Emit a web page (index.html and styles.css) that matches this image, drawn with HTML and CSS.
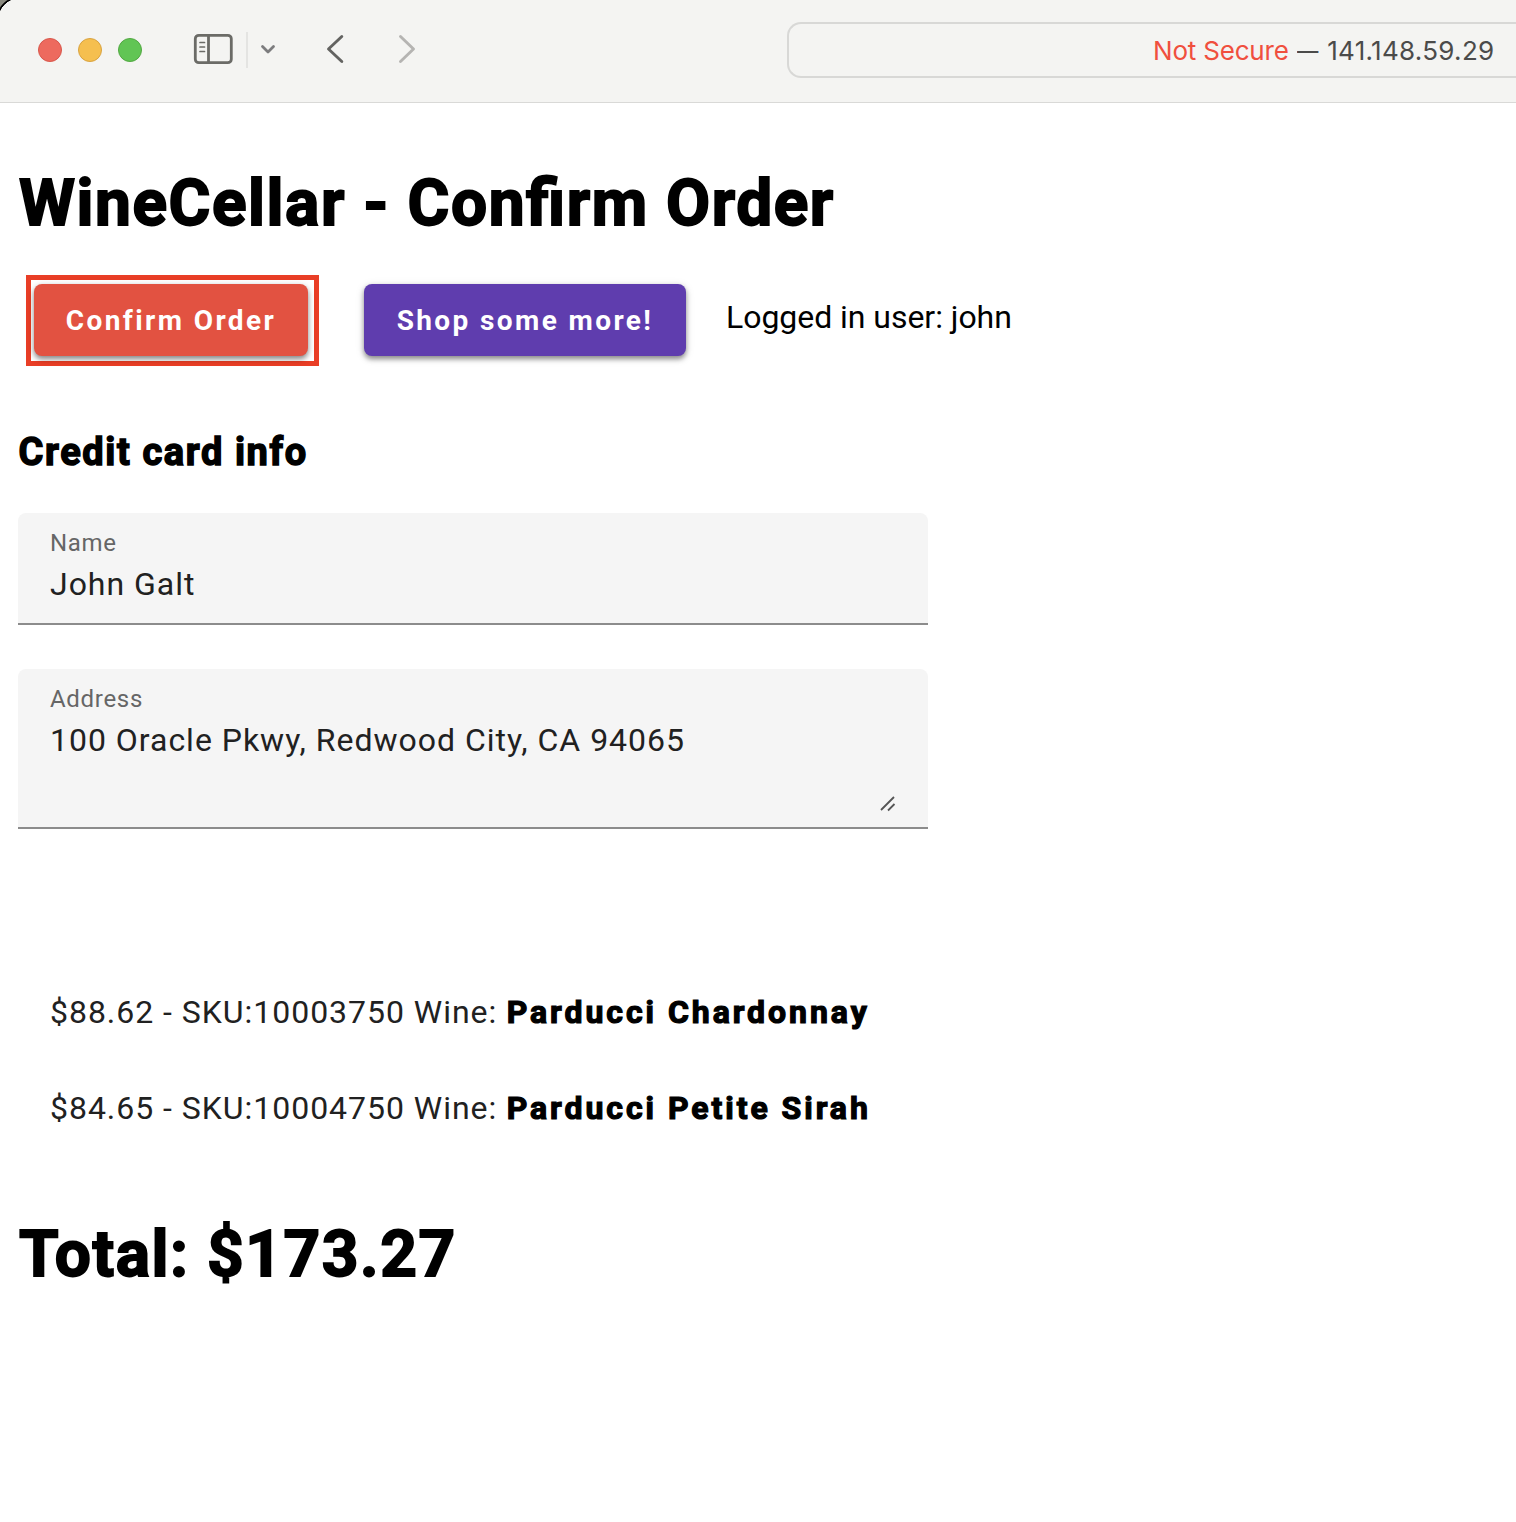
FILE: index.html
```html
<!DOCTYPE html>
<html lang="en">
<head>
<meta charset="utf-8">
<title>WineCellar - Confirm Order</title>
<link rel="stylesheet" href="styles.css">
</head>
<body>
<header class="toolbar">
  <span class="light red"></span><span class="light yellow"></span><span class="light green"></span>
  <svg class="sidebar-icon" width="40" height="32" viewBox="0 0 40 32" fill="none" stroke="#6b6b67" stroke-width="2.800"><rect x="2.300" y="2.300" width="36" height="27.400" rx="3.500"/><path d="M15.500 2.500v27"/><path stroke-width="1.700" stroke-linecap="round" d="M7 9.500h4.500M7 14h4.500M7 18.500h4.500"/></svg>
  <span class="divider"></span>
  <svg class="down-icon" width="16" height="10" viewBox="0 0 16 10" fill="none" stroke="#7c7c7e" stroke-width="2.800" stroke-linecap="round" stroke-linejoin="round"><path d="M2.500 2.500l5.500 5.500L13.500 2.500"/></svg>
  <svg class="back-icon" width="20" height="30" viewBox="0 0 20 30" fill="none" stroke="#636361" stroke-width="2.900" stroke-linecap="round" stroke-linejoin="round"><path d="M16.800 2.500L3.500 15l13.300 12.500"/></svg>
  <svg class="forward-icon" width="20" height="30" viewBox="0 0 20 30" fill="none" stroke="#b5b4b2" stroke-width="2.900" stroke-linecap="round" stroke-linejoin="round"><path d="M3.500 2.500l13 12.500L3.500 27.500"/></svg>
  <div class="address-bar"><span class="insecure">Not Secure</span><span class="dash">—</span><span class="host">141.148.59.29</span></div>
</header>
<main>
  <h1>WineCellar - Confirm Order</h1>
  <div class="actions">
    <div class="highlight"><button class="button confirm">Confirm Order</button></div>
    <button class="button shop">Shop some more!</button>
    <span class="user">Logged in user: john</span>
  </div>
  <h2>Credit card info</h2>
  <div class="field name"><div class="label">Name</div><div class="value">John Galt</div></div>
  <div class="field address"><div class="label">Address</div><div class="value">100 Oracle Pkwy, Redwood City, CA 94065</div>
    <svg class="grip" width="16" height="16" viewBox="0 0 16 16" stroke="#555" stroke-width="1.800"><path d="M1 14L14 1M8 14.500l6.500-6.500"/></svg>
  </div>
  <ul class="items">
    <li><span>$88.62 - SKU:10003750 Wine: </span><b>Parducci Chardonnay</b></li>
    <li><span>$84.65 - SKU:10004750 Wine: </span><b>Parducci Petite Sirah</b></li>
  </ul>
  <h1 class="total">Total: $173.27</h1>
</main>
</body>
</html>
```
FILE: styles.css
```css
* { box-sizing: border-box; }
body { margin: 0; background: #fff; color: #000; font-family: Roboto, "Liberation Sans", sans-serif; height: 1522px; overflow: hidden; }
.toolbar { display: flex; align-items: center; height: 103px; padding: 0 0 3px 38px; background: radial-gradient(circle at 20px 20px, #f4f4f2 21.500px, #000 22px 23px, #8a8a80 24px) 0 0 / 12px 12px no-repeat, #f4f4f2; border-bottom: 1px solid #d9d9d7; }
.toolbar > * { flex: none; }
.light { width: 24px; height: 24px; margin-right: 16px; border-radius: 50%; border: 1px solid #d8574c; background: #ed6a5e; }
.yellow { background: #f5bf4f; border-color: #d9a341; }
.green { background: #61c554; border-color: #52a842; }
.sidebar-icon { margin: 0 0 2px 35px; }
.divider { width: 2px; height: 36px; margin-left: 13px; background: #e4e4e2; }
.down-icon { margin: 0 0 2px 12px; }
.back-icon { margin: 0 0 2px 49px; }
.forward-icon { margin: 0 0 2px 52px; }
.address-bar { display: flex; justify-content: flex-end; align-items: center; width: 729px; height: 56px; margin-left: 370px; padding: 2px 21.500px 0 0; border: 2px solid #d8d8d6; border-right: 0; border-radius: 14px 0 0 14px; font: 26px/32px Inter, sans-serif; color: #4b4b4a; }
.insecure { color: #f04f3e; letter-spacing: -.2px; }
.dash { width: 22px; margin: 0 8.500px 0 8px; transform: scaleX(.82); transform-origin: left; }
.host { letter-spacing: .3px; }
main { padding: 64px 18px 0; }
h1 { margin: 0; height: 74px; padding-left: 1px; font-size: 64px; line-height: 74px; font-weight: 700; letter-spacing: 1.550px; font-feature-settings: "liga" 1; -webkit-text-stroke: 1.800px #000; white-space: nowrap; }
.actions { display: flex; align-items: flex-start; margin: 34px 0 0 8px; height: 91px; }
.highlight { width: 293px; height: 91px; padding: 4px 3px; border: 5px solid #e93e26; }
.button { height: 72px; padding: 1px 0 0; border: 0; border-radius: 8px; color: #fff; font: 700 28px/71px Roboto, sans-serif; letter-spacing: 2.400px; box-shadow: 0 3px 5px #0006, 0 2px 10px #0002; white-space: nowrap; }
.confirm { width: 274px; background: #e25241; }
.shop { width: 322px; margin: 9px 0 0 45px; background: #5f3dae; }
.user { margin: 23px 0 0 40px; font-size: 32px; line-height: 38px; letter-spacing: -.04px; }
h2 { margin: 63px 0 0; padding-left: .5px; font-size: 38px; line-height: 46px; font-weight: 700; letter-spacing: 1.600px; -webkit-text-stroke: 1.400px #000; }
.field { position: relative; width: 910px; padding: 16px 32px 0; background: #f5f5f5; border-bottom: 2px solid #8c8c8c; border-radius: 8px 8px 0 0; }
.name { height: 112px; margin-top: 38px; }
.address { height: 160px; margin-top: 44px; }
.label { font-size: 24px; line-height: 28px; letter-spacing: .700px; color: #666; }
.value { margin-top: 8px; font-size: 32px; line-height: 38px; letter-spacing: .980px; color: #212121; }
.grip { position: absolute; right: 32px; bottom: 15px; }
.items { list-style: none; margin: 135px 0 0; padding: 0 32px; }
.items li { height: 96px; font-size: 32px; line-height: 96px; letter-spacing: .970px; color: #212121; white-space: pre; }
.items b { padding-left: .5px; font-weight: 700; letter-spacing: 2.950px; -webkit-text-stroke: 1.200px #000; color: #000; }
.total { margin-top: 62px; }
```
